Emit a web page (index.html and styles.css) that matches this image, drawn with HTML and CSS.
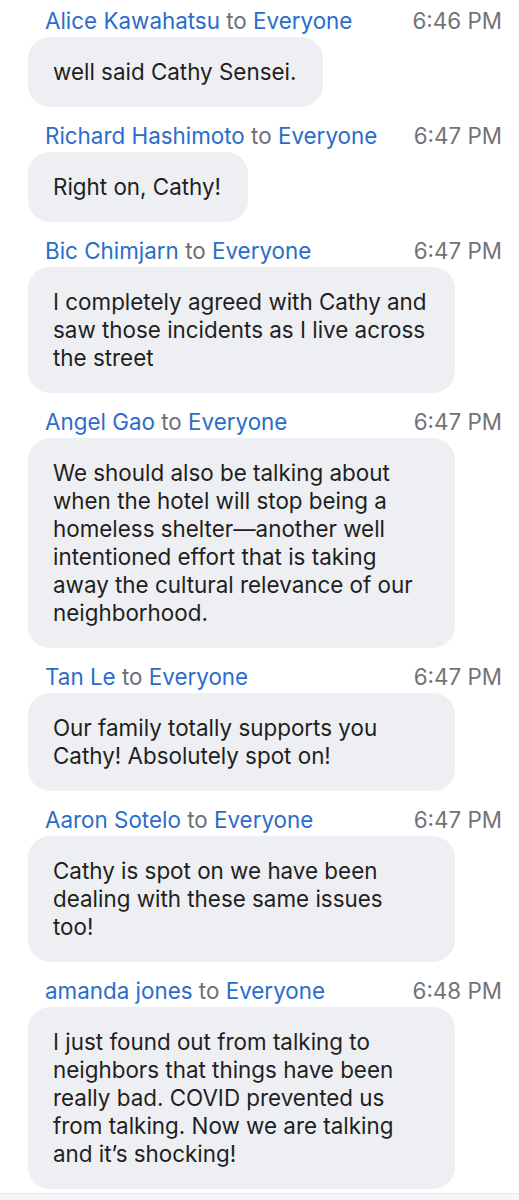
FILE: index.html
```html
<!DOCTYPE html>
<html lang="en">
<head>
<meta charset="utf-8">
<title>Chat</title>
<link rel="stylesheet" href="styles.css">
</head>
<body>
<main class="chat">
  <section class="msg">
    <div class="meta"><span class="from"><span class="who">Alice Kawahatsu</span> <span class="to">to</span> <span class="who">Everyone</span></span><span class="time">6:46 PM</span></div>
    <div class="bubble">well said Cathy Sensei.</div>
  </section>
  <section class="msg">
    <div class="meta"><span class="from"><span class="who">Richard Hashimoto</span> <span class="to">to</span> <span class="who">Everyone</span></span><span class="time">6:47 PM</span></div>
    <div class="bubble">Right on, Cathy!</div>
  </section>
  <section class="msg">
    <div class="meta"><span class="from"><span class="who">Bic Chimjarn</span> <span class="to">to</span> <span class="who">Everyone</span></span><span class="time">6:47 PM</span></div>
    <div class="bubble">I completely agreed with Cathy and saw those incidents as I live across the street</div>
  </section>
  <section class="msg">
    <div class="meta"><span class="from"><span class="who">Angel Gao</span> <span class="to">to</span> <span class="who">Everyone</span></span><span class="time">6:47 PM</span></div>
    <div class="bubble">We should also be talking about when the hotel will stop being a homeless shelter—another well intentioned effort that is taking away the cultural relevance of our neighborhood.</div>
  </section>
  <section class="msg">
    <div class="meta"><span class="from"><span class="who">Tan Le</span> <span class="to">to</span> <span class="who">Everyone</span></span><span class="time">6:47 PM</span></div>
    <div class="bubble">Our family totally supports you Cathy! Absolutely spot on!</div>
  </section>
  <section class="msg">
    <div class="meta"><span class="from"><span class="who">Aaron Sotelo</span> <span class="to">to</span> <span class="who">Everyone</span></span><span class="time">6:47 PM</span></div>
    <div class="bubble">Cathy is spot on we have been dealing with these same issues too!</div>
  </section>
  <section class="msg">
    <div class="meta"><span class="from"><span class="who">amanda jones</span> <span class="to">to</span> <span class="who">Everyone</span></span><span class="time">6:48 PM</span></div>
    <div class="bubble">I just found out from talking to neighbors that things have been really bad. COVID prevented us from talking. Now we are talking and it’s shocking!</div>
  </section>
</main>
<div class="footer-strip"></div>
</body>
</html>
```

FILE: styles.css
```css
html, body {
  margin: 0;
  padding: 0;
  background: #ffffff;
}
body {
  font-family: "Inter", "Liberation Sans", sans-serif;
  font-size: 22.4px;
  color: #1c1c1e;
  width: 519px;
  height: 1200px;
  overflow: hidden;
  position: relative;
}
.chat {
  display: flex;
  flex-direction: column;
  gap: 15px;
  padding: 7px 17px 0 28px;
}
.msg {
  display: flex;
  flex-direction: column;
  align-items: flex-start;
  gap: 2px;
}
.meta {
  display: flex;
  justify-content: space-between;
  align-items: center;
  align-self: stretch;
  padding-left: 17px;
  height: 28px;
  line-height: 28px;
  white-space: nowrap;
}
.who {
  color: #2b6dca;
}
.to {
  color: #6f6f73;
}
.time {
  color: #737376;
}
.bubble {
  background: #eeeff3;
  border-radius: 22px;
  padding: 21px 27px 21px 25px;
  line-height: 28px;
  max-width: 375px;
  color: #1f1f22;
}
.footer-strip {
  position: absolute;
  left: 0;
  right: 0;
  bottom: 0;
  height: 6px;
  background: #f4f5f9;
  border-top: 1px solid #e9eaf0;
}
```
